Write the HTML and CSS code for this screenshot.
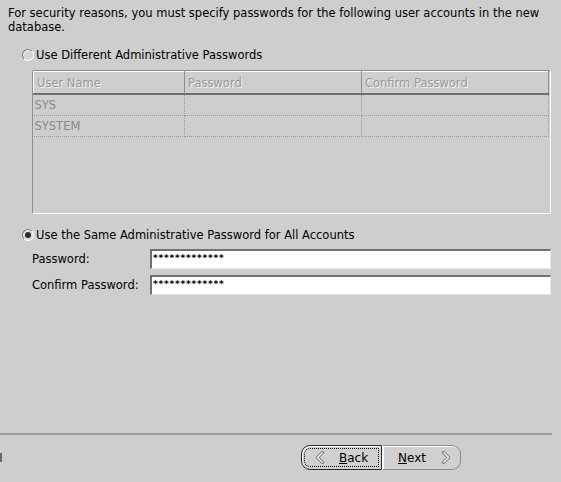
FILE: index.html
```html
<!DOCTYPE html>
<html lang="en">
<head>
    <meta charset="UTF-8">
    <title>Database Credentials</title>
    <link rel="stylesheet" href="styles.css">
</head>
<body>
    <div class="page">
        <p class="intro">For security reasons, you must specify passwords for the following user accounts in the new database.</p>

        <div class="radio"><span class="dot"></span>Use Different Administrative Passwords</div>

        <div class="table-frame">
            <table class="accounts">
                <thead>
                    <tr>
                        <th class="col-user">User Name</th>
                        <th class="col-pass">Password</th>
                        <th>Confirm Password</th>
                    </tr>
                </thead>
                <tbody>
                    <tr><td>SYS</td><td></td><td></td></tr>
                    <tr><td>SYSTEM</td><td></td><td></td></tr>
                </tbody>
            </table>
        </div>

        <div class="radio second"><span class="dot checked"></span>Use the Same Administrative Password for All Accounts</div>

        <div class="fields">
            <span class="label">Password:</span>
            <div class="field">*************</div>
            <span class="label">Confirm Password:</span>
            <div class="field">*************</div>
        </div>
    </div>

    <div class="footer">
        <div class="separator"></div>
        <div class="button-row">
            <span class="stub"></span>
            <div class="nav">
                <button class="btn back">
                    <span class="focus">
                        <svg width="10" height="13" viewBox="0 0 10 13"><path d="M7.5 1.5 L2.5 6.5 L7.5 11.5" fill="none" stroke="#8a8a8a" stroke-width="3.4" stroke-linejoin="round" stroke-linecap="round"/><path d="M7.5 1.5 L2.5 6.5 L7.5 11.5" fill="none" stroke="#f4f4f4" stroke-width="1.2" stroke-linejoin="round"/></svg>
                        <span class="text"><u>B</u>ack</span>
                    </span>
                </button>
                <button class="btn next">
                    <span class="text"><u>N</u>ext</span>
                    <svg width="10" height="13" viewBox="0 0 10 13"><path d="M2.5 1.5 L7.5 6.5 L2.5 11.5" fill="none" stroke="#8a8a8a" stroke-width="3.4" stroke-linejoin="round" stroke-linecap="round"/><path d="M2.5 1.5 L7.5 6.5 L2.5 11.5" fill="none" stroke="#f4f4f4" stroke-width="1.2" stroke-linejoin="round"/></svg>
                </button>
            </div>
        </div>
    </div>
</body>
</html>
```

FILE: styles.css
```css
html, body { margin: 0; padding: 0; }
body {
    font-family: "DejaVu Sans", sans-serif;
    font-size: 11.5px;
    color: #000;
    background-color: #cecece;
    width: 561px;
    height: 482px;
    display: flex;
    flex-direction: column;
    overflow: hidden;
}
.page { padding: 6px 10px 0 8px; flex: 1; }
.intro { margin: 0; line-height: 14px; }

.radio {
    display: flex;
    align-items: center;
    margin: 13px 0 0 14px;
    height: 16px;
    gap: 2px;
}
.dot {
    width: 12px;
    height: 12px;
    border-radius: 50%;
    background-color: #d6d6d6;
    border: 1px solid #7c7c7c;
    border-right-color: #fff;
    border-bottom-color: #fff;
    box-sizing: border-box;
    position: relative;
    box-shadow: inset 1px 1px 0 #f0f0f0;
}
.dot.checked::after {
    content: "";
    position: absolute;
    left: 2px;
    top: 2px;
    width: 6px;
    height: 6px;
    border-radius: 50%;
    background-color: #2e2e2e;
}

.table-frame {
    margin: 7px 0 0 24px;
    height: 144px;
    border: 1px solid #fff;
    border-left-color: #8f8f8f;
    border-top-color: #8f8f8f;
    border-radius: 2px;
    box-sizing: border-box;
    padding: 0 2px 0 0;
}
.accounts {
    width: 516px;
    border-collapse: collapse;
    color: #8a8a8a;
}
.accounts th {
    font-weight: normal;
    text-align: left;
    height: 21px;
    padding: 0 3px;
    border-top: 1px solid #fff;
    border-left: 1px solid #fff;
    border-right: 1px solid #8f8f8f;
    border-bottom: 2px solid #6f6f6f;
    color: #9a9a9a;
    text-shadow: 1px 1px 0 #f2f2f2;
}
.accounts .col-user { width: 144px; }
.accounts .col-pass { width: 170px; }
.accounts td {
    height: 20px;
    padding: 0 1px;
    border-right: 1px dotted #999;
    border-bottom: 1px dotted #999;
}

.fields {
    display: grid;
    grid-template-columns: 118px 1fr;
    row-gap: 6px;
    margin: 6px 0 0 24px;
    align-items: center;
}
.field {
    height: 20px;
    box-sizing: border-box;
    background-color: #fff;
    border: 1px solid #e8e8e8;
    border-top: 2px solid #6f6f6f;
    border-left: 2px solid #6f6f6f;
    font-size: 9px;
    font-weight: bold;
    letter-spacing: 0.8px;
    line-height: 14px;
    padding-left: 1px;
}

.footer { height: 49px; }
.separator {
    height: 2px;
    margin-right: 9px;
    background-color: #9c9c9c;
}
.button-row {
    display: flex;
    align-items: center;
    justify-content: space-between;
    padding: 10px 0 0;
}
.stub { width: 2px; height: 9px; background-color: #6c6c6c; }
.nav { display: flex; margin-right: 100px; }
.btn {
    font-family: inherit;
    font-size: 12px;
    color: #000;
    height: 25px;
    background-color: #d0d0d0;
    border: 1px solid #2a2a2a;
    padding: 0;
    display: flex;
    align-items: center;
}
.btn u { text-decoration: underline; }
.back {
    width: 81px;
    border-radius: 9px 0 0 9px;
    box-shadow: inset 1px 1px 0 #fff;
    padding: 2px;
}
.back .focus {
    flex: 1;
    height: 100%;
    border: 1px dotted #000;
    box-sizing: border-box;
    border-radius: 6px 0 0 6px;
    display: flex;
    align-items: center;
    padding-left: 10px;
    gap: 14px;
}
.next {
    width: 79px;
    border-color: #8a8a8a #8a8a8a #8a8a8a #fff;
    border-radius: 0 9px 9px 0;
    box-shadow: inset 1px 1px 0 #fff;
    padding-left: 15px;
    gap: 15px;
}
```
